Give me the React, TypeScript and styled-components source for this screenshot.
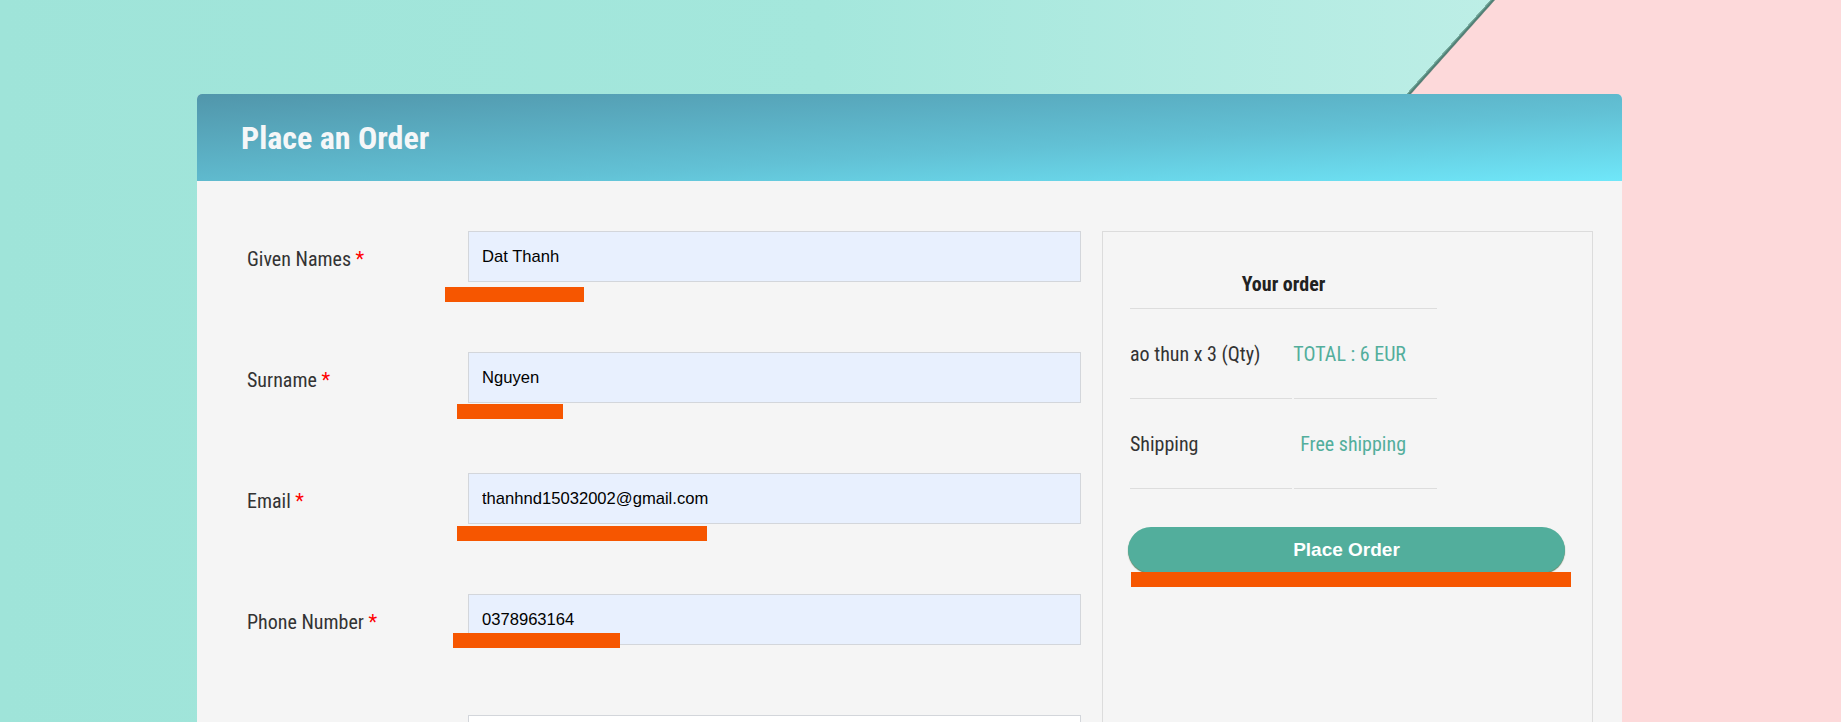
import React from "react";
import styled, { createGlobalStyle } from "styled-components";

const GlobalStyle = createGlobalStyle`
  html, body {
    margin: 0;
    padding: 0;
  }
  body {
    font-family: Roboto, "Liberation Sans", sans-serif;
    font-stretch: 87.5%;
    background: #fdd9da;
  }
  ::-webkit-scrollbar {
    width: 15px;
    background: #f8f8f8;
  }
  ::-webkit-scrollbar-thumb {
    background: #8b8b8b;
    border-radius: 8px;
    border: 3px solid #f8f8f8;
  }
`;

const fields = [
  { id: "given", label: "Given Names", value: "Dat Thanh", mark: { x: -23, y: 56, w: 139 } },
  { id: "surname", label: "Surname", value: "Nguyen", mark: { x: -11, y: 52, w: 106 } },
  { id: "email", label: "Email", value: "thanhnd15032002@gmail.com", mark: { x: -11, y: 53, w: 250 } },
  { id: "phone", label: "Phone Number", value: "0378963164", mark: { x: -15, y: 39, w: 167 } },
  { id: "address", label: "Address", value: "" },
];

const App = () => {
  return (
    <>
      <GlobalStyle />
      <Page>
        <Card>
          <CardHeader>
            <Title>Place an Order</Title>
          </CardHeader>
          <CardBody>
            <Fields>
              {fields.map((f) => (
                <React.Fragment key={f.id}>
                  <Label htmlFor={f.id}>
                    {f.label} <Required>*</Required>
                  </Label>
                  <InputWrap>
                    <Input
                      id={f.id}
                      name={f.id}
                      defaultValue={f.value}
                      $filled={f.value !== ""}
                      autoComplete="off"
                    />
                    {f.mark && <Redact $x={f.mark.x} $y={f.mark.y} $w={f.mark.w} />}
                  </InputWrap>
                </React.Fragment>
              ))}
            </Fields>
            <Summary>
              <OrderTable>
                <OrderHead>Your order</OrderHead>
                <Cell>ao thun x 3 (Qty)</Cell>
                <Cell $accent>TOTAL : 6 EUR</Cell>
                <Cell>Shipping</Cell>
                <Cell $accent>Free shipping</Cell>
              </OrderTable>
              <ButtonWrap>
                <OrderButton type="button">Place Order</OrderButton>
                <Redact $x={3} $y={45} $w={440} />
              </ButtonWrap>
            </Summary>
          </CardBody>
        </Card>
      </Page>
    </>
  );
};

const Page = styled.div`
  min-height: 100vh;
  box-sizing: border-box;
  padding: 94px 0 60px 197px;
  background:
    linear-gradient(
        131.8deg,
        transparent 0 1111px,
        rgba(120, 170, 158, 0.8) 1111px,
        #4a8073 1113px,
        #5d7f78 1114px,
        #fdd9da 1115px
      )
      0 0 / 1826px 1400px no-repeat,
    linear-gradient(to right, #9fe4d9 0%, #a4e7dc 45%, #bdeee6 82%, #c0efe7 100%)
      0 0 / 1826px 1400px no-repeat,
    #fdd9da;
`;

const Card = styled.section`
  width: 1425px;
  background: #f5f5f5;
  border-radius: 5px;
  overflow: hidden;
`;

const CardHeader = styled.header`
  height: 87px;
  display: flex;
  align-items: center;
  padding: 0 44px;
  background: linear-gradient(176.5deg, #5196ab 0%, #62c1d5 60%, #6fe7f9 100%);
`;

const Title = styled.h1`
  margin: 0;
  font-size: 32px;
  font-weight: 700;
  color: #f5f7f8;
`;

const CardBody = styled.div`
  display: flex;
  gap: 21px;
  padding: 50px 32px 60px 50px;
`;

const Fields = styled.form`
  width: 834px;
  flex: none;
  display: grid;
  grid-template-columns: 221px 613px;
  row-gap: 70px;
  align-items: center;
`;

const Label = styled.label`
  padding-top: 4px;
  font-size: 20px;
  color: #333;
`;

const Required = styled.span`
  color: #ff0000;
`;

const InputWrap = styled.div`
  position: relative;
`;

const Input = styled.input<{ $filled?: boolean }>`
  display: block;
  width: 100%;
  height: 51px;
  box-sizing: border-box;
  margin: 0;
  padding: 1px 13px 0;
  border: 1px solid #d3d6db;
  outline: none;
  font-family: "Liberation Sans", Arial, sans-serif;
  font-stretch: normal;
  font-size: 16.6px;
  color: #000;
  background: ${({ $filled }) => ($filled ? "#e8f0fe" : "#ffffff")};
`;

const Redact = styled.span<{ $x: number; $y: number; $w: number }>`
  position: absolute;
  left: ${({ $x }) => $x}px;
  top: ${({ $y }) => $y}px;
  width: ${({ $w }) => $w}px;
  height: 15px;
  background: #f65600;
`;

const Summary = styled.aside`
  flex: 1;
  border: 1px solid #dcdcdc;
  padding: 27px;
`;

const OrderTable = styled.div`
  display: grid;
  grid-template-columns: 162px 143px;
  column-gap: 2px;
`;

const OrderHead = styled.div`
  grid-column: 1 / -1;
  height: 50px;
  box-sizing: border-box;
  display: flex;
  align-items: center;
  justify-content: center;
  border-bottom: 1px solid #dddddd;
  font-size: 20px;
  font-weight: 700;
  color: #222;
`;

const Cell = styled.div<{ $accent?: boolean }>`
  height: 90px;
  box-sizing: border-box;
  display: flex;
  align-items: center;
  justify-content: ${({ $accent }) => ($accent ? "flex-end" : "flex-start")};
  padding-right: ${({ $accent }) => ($accent ? "31px" : "0")};
  border-bottom: 1px solid #dddddd;
  white-space: nowrap;
  font-size: 20px;
  color: ${({ $accent }) => ($accent ? "#52ae9c" : "#333")};
`;

const ButtonWrap = styled.div`
  position: relative;
  margin: 38px 0 0 -2px;
`;

const OrderButton = styled.button`
  display: block;
  width: 437px;
  height: 46px;
  border: none;
  border-radius: 23px;
  background: #52ae9c;
  box-shadow: 0 1px 1px rgba(40, 80, 30, 0.7);
  color: #fff;
  font-family: "Liberation Sans", Arial, sans-serif;
  font-stretch: normal;
  font-size: 19px;
  font-weight: 700;
  cursor: pointer;
`;

export default App;
